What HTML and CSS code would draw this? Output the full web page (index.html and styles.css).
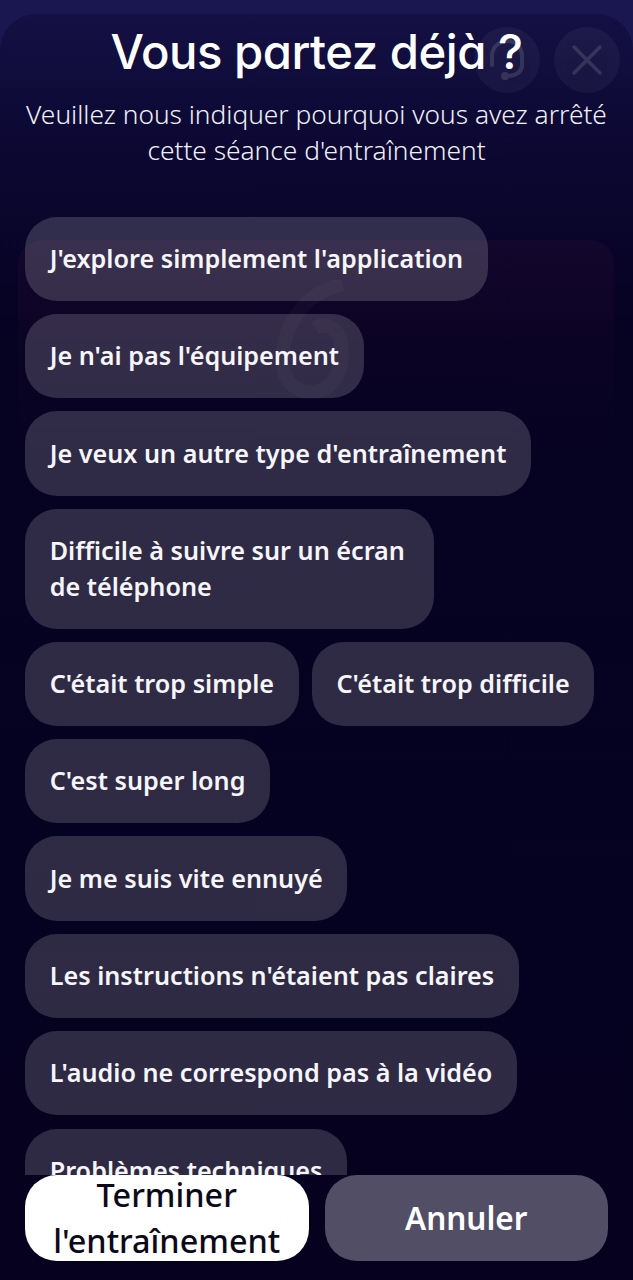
FILE: index.html
```html
<!DOCTYPE html>
<html lang="fr">
<head>
    <meta charset="UTF-8">
    <meta name="viewport" content="width=device-width, initial-scale=1.0">
    <title>Vous partez déjà ?</title>
    <link rel="stylesheet" href="styles.css">
</head>
<body>

<div class="sheet">
    <!-- Boutons derrière le titre -->
    <div class="round-btn help-btn">
        <svg width="44" height="44" viewBox="0 0 44 44" fill="none" stroke="#fff" stroke-width="4" stroke-linecap="round">
            <path d="M7 27V18a15 15 0 0 1 30 0v9"/>
            <path d="M37 27c0 7-5 10-13 11"/>
            <circle cx="20" cy="38" r="4" fill="#fff" stroke="none"/>
        </svg>
    </div>
    <div class="round-btn close-btn">
        <svg width="32" height="32" viewBox="0 0 32 32" fill="none" stroke="#fff" stroke-width="3.5" stroke-linecap="round">
            <path d="M3 3l26 26M29 3L3 29"/>
        </svg>
    </div>

    <!-- Carte vidéo en fond -->
    <div class="ghost-card">
        <svg class="ghost-icon" width="90" height="120" viewBox="0 0 90 120" fill="none" stroke="#fff" stroke-width="14">
            <path d="M72 4C30 14 10 50 12 84c1 20 16 30 32 28 20-3 30-26 26-50-3-14-16-20-26-14"/>
        </svg>
    </div>

    <h1 class="title">Vous partez déjà ?</h1>
    <p class="subtitle">Veuillez nous indiquer pourquoi vous avez arrêté<br>cette séance d'entraînement</p>

    <div class="reasons">
        <div class="chip">J'explore simplement l'application</div>
        <div class="chip">Je n'ai pas l'équipement</div>
        <div class="chip">Je veux un autre type d'entraînement</div>
        <div class="chip chip-wrapped">Difficile à suivre sur un écran<br>de téléphone</div>
        <div class="chip-row">
            <div class="chip">C'était trop simple</div>
            <div class="chip">C'était trop difficile</div>
        </div>
        <div class="chip">C'est super long</div>
        <div class="chip">Je me suis vite ennuyé</div>
        <div class="chip">Les instructions n'étaient pas claires</div>
        <div class="chip">L'audio ne correspond pas à la vidéo</div>
        <div class="chip">Problèmes techniques</div>
    </div>

    <div class="actions">
        <button class="action action-finish"><span class="action-label">Terminer l'entraînement</span></button>
        <button class="action action-cancel">Annuler</button>
    </div>
</div>

</body>
</html>
```

FILE: styles.css
```css
* {
    box-sizing: border-box;
}
html, body {
    height: 100%;
}
body {
    margin: 0;
    padding-top: 14px;
    background: #1a164f;
    font-family: "Noto Sans", sans-serif;
    color: #fff;
    overflow: hidden;
}
.sheet {
    position: relative;
    height: 1266px;
    display: flex;
    flex-direction: column;
    padding: 0 25px 19px;
    border-radius: 36px 36px 0 0;
    background: linear-gradient(180deg, #141043 0%, #0b0730 12%, #060222 25%, #05011f 100%);
    overflow: hidden;
}

/* Titre */
.title {
    position: relative;
    margin: 3px 0 0;
    font-family: Inter, sans-serif;
    font-feature-settings: "cv11";
    font-size: 47.3px;
    font-weight: 500;
    line-height: 70px;
    letter-spacing: -0.5px;
    text-align: center;
}
.subtitle {
    position: relative;
    margin: 9px -15px 0;
    font-family: "Noto Sans", sans-serif;
    font-size: 26.3px;
    font-weight: 300;
    line-height: 36px;
    text-align: center;
    color: #f1f0f6;
}

/* Boutons ronds */
.round-btn {
    position: absolute;
    top: 13px;
    width: 66px;
    height: 66px;
    display: flex;
    align-items: center;
    justify-content: center;
    border-radius: 50%;
    background: rgba(255, 255, 255, 0.045);
}
.round-btn svg {
    opacity: 0.12;
}
.help-btn {
    left: 474px;
}
.close-btn {
    left: 554px;
}

/* Carte derrière la liste */
.ghost-card {
    position: absolute;
    left: 18px;
    top: 226px;
    width: 596px;
    height: 230px;
    display: flex;
    justify-content: center;
    border-radius: 24px;
    background: linear-gradient(180deg, rgba(60, 15, 55, 0.2) 0%, rgba(40, 10, 50, 0.1) 60%, rgba(20, 5, 40, 0) 100%);
}
.ghost-icon {
    margin-top: 40px;
    opacity: 0.025;
}

/* Liste des raisons */
.reasons {
    position: relative;
    flex: 1;
    min-height: 0;
    margin-top: 48.6px;
    display: flex;
    flex-direction: column;
    align-items: flex-start;
    gap: 13.2px;
    overflow: hidden;
}
.chip-row {
    display: flex;
    gap: 13px;
}
.chip {
    flex-shrink: 0;
    padding: 24.3px 24.7px;
    border-radius: 32px;
    background: rgba(255, 255, 255, 0.165);
    font-size: 25.2px;
    font-weight: 600;
    line-height: 35.6px;
    color: #f6f5f9;
}
.chip-wrapped {
    padding-right: 29px;
}

/* Boutons du bas */
.actions {
    position: relative;
    display: flex;
    gap: 16px;
}
.action {
    flex: 1;
    height: 86px;
    padding: 0;
    border: none;
    border-radius: 32px;
    font-family: "Noto Sans", sans-serif;
    font-size: 32.4px;
    font-weight: 500;
    line-height: 46px;
}
.action-label {
    display: block;
    margin-top: -4px;
}
.action-finish {
    background: #fff;
    color: #0c0a18;
}
.action-cancel {
    background: #514e66;
    color: #fff;
    font-size: 31.5px;
    font-weight: 600;
}
```
